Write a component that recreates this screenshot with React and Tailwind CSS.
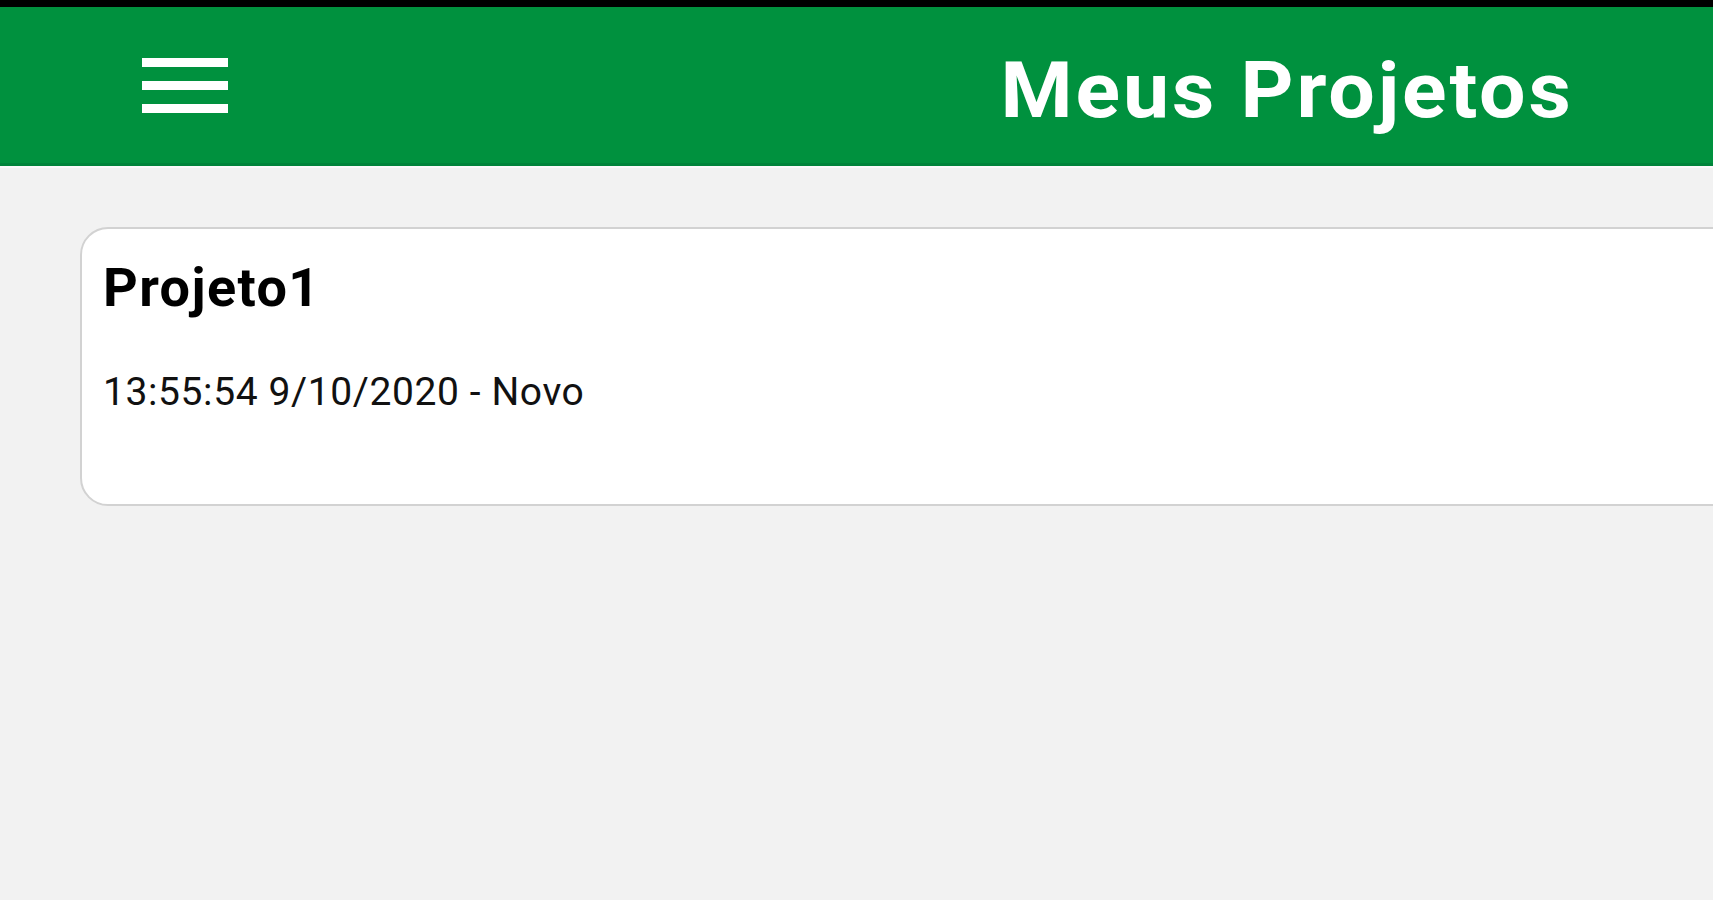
export default function App() {
    return (
        <div
            className="min-h-screen w-full overflow-hidden bg-[#f2f2f2]"
            style={{ fontFamily: "Roboto, 'Liberation Sans', sans-serif" }}
        >
            {/* status strip */}
            <div className="h-[7px] bg-black" />

            {/* toolbar */}
            <header className="h-[159px] bg-[#00913e] border-b-[3px] border-[#00843a] flex items-center justify-between pl-[142px] pr-[139px]">
                <button type="button" className="flex flex-col gap-[14px] pt-[1px]">
                    <span className="block w-[86px] h-[9px] bg-white" />
                    <span className="block w-[86px] h-[9px] bg-white" />
                    <span className="block w-[86px] h-[9px] bg-white" />
                </button>
                <h1 className="text-white font-bold text-[77px] leading-none tracking-[2.7px] pt-[12px] origin-right scale-x-[1.07]">
                    Meus Projetos
                </h1>
            </header>
            <div className="h-[2px] bg-[#fafafa]" />

            {/* project list */}
            <main className="pl-[80px] pt-[59px]">
                <div className="-mr-[40px] h-[279px] bg-white border-2 border-[#d2d2d2] rounded-[28px] pl-[21px] pt-[27px]">
                    <h2 className="text-black font-bold text-[54px] leading-[64px] tracking-[1.4px]">Projeto1</h2>
                    <p className="mt-[48px] text-[#111] text-[39px] leading-[48px] tracking-[0.6px]">
                        13:55:54 9/10/2020 - Novo
                    </p>
                </div>
            </main>
        </div>
    );
}
